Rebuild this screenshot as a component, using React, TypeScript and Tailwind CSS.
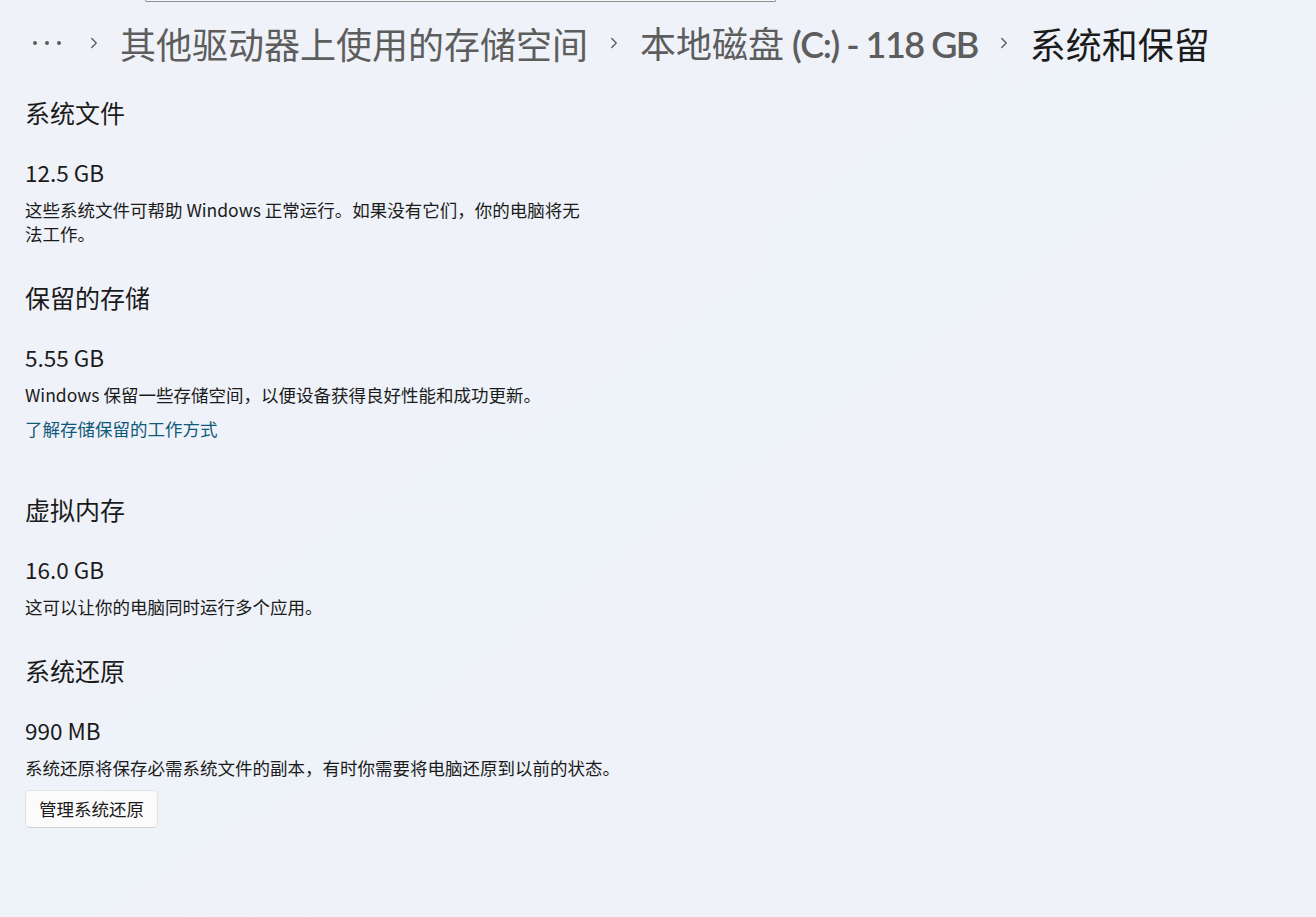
import { ChevronRight } from "lucide-react";

const sections = [
  {
    title: "系统文件",
    size: "12.5 GB",
    desc: "这些系统文件可帮助 Windows 正常运行。如果没有它们，你的电脑将无法工作。",
    narrow: true,
  },
  {
    title: "保留的存储",
    size: "5.55 GB",
    desc: "Windows 保留一些存储空间，以便设备获得良好性能和成功更新。",
    link: "了解存储保留的工作方式",
  },
  {
    title: "虚拟内存",
    size: "16.0 GB",
    desc: "这可以让你的电脑同时运行多个应用。",
  },
  {
    title: "系统还原",
    size: "990 MB",
    desc: "系统还原将保存必需系统文件的副本，有时你需要将电脑还原到以前的状态。",
    action: "管理系统还原",
  },
];

function Sep() {
  return <ChevronRight size={18} strokeWidth={1.8} className="mx-[17px] text-[#5d5d5d] shrink-0" />;
}

export default function App() {
  return (
    <div
      className="min-h-[917px] w-full bg-gradient-to-br from-[#f0f2f8] via-[#eef2f9] to-[#f1f2f7] text-[#1b1b1b] overflow-hidden"
      style={{ fontFamily: '"Segoe UI", "Noto Sans CJK SC", "Noto Sans", sans-serif' }}
    >
      {/* bottom edge of the search box above */}
      <div className="ml-[145px] w-[631px] h-[2px] rounded-b-[6px] border-b border-x border-[#8d8d8d] bg-[#f6f7fb]" />

      {/* breadcrumb */}
      <div className="flex items-center h-[86px] -mt-[2px] pl-[33px] text-[36px] leading-none whitespace-nowrap text-[#5d5d5d]">
        <span className="flex items-center gap-[8px]">
          <span className="w-[4px] h-[4px] rounded-full bg-[#5d5d5d]" />
          <span className="w-[4px] h-[4px] rounded-full bg-[#5d5d5d]" />
          <span className="w-[4px] h-[4px] rounded-full bg-[#5d5d5d]" />
        </span>
        <span className="ml-[7px]" />
        <Sep />
        <span>其他驱动器上使用的存储空间</span>
        <Sep />
        <span>
          本地磁盘{" "}
          <span className="font-semibold tracking-[-1.5px]" style={{ fontFamily: "Lato, sans-serif" }}>
            (C:) - 118 GB
          </span>
        </span>
        <Sep />
        <span className="text-[#1b1b1b]">系统和保留</span>
      </div>

      <div className="pl-[25px]">
        {sections.map((s, i) => (
          <section key={s.title} className={i === 2 ? "mt-[50px]" : i > 0 ? "mt-[33px]" : "mt-[8px]"}>
            <h2 className="text-[25px] leading-[36px]">{s.title}</h2>
            <div className="mt-[28px] text-[22.5px] leading-[28px]">{s.size}</div>
            <p className={`mt-[12px] text-[17.5px] leading-[24px] ${s.narrow ? "w-[565px]" : "w-[640px]"}`}>
              {s.desc}
            </p>
            {s.link && (
              <a className="block mt-[10px] text-[17.5px] leading-[24px] text-[#0f5a7a]">{s.link}</a>
            )}
            {s.action && (
              <button className="mt-[10px] h-[38px] px-[13px] rounded-[5px] bg-[#fbfbfc] border border-[#e3e3e6] border-b-[#cfcfd2] text-[17.5px] text-[#1b1b1b]">
                {s.action}
              </button>
            )}
          </section>
        ))}
      </div>
    </div>
  );
}
